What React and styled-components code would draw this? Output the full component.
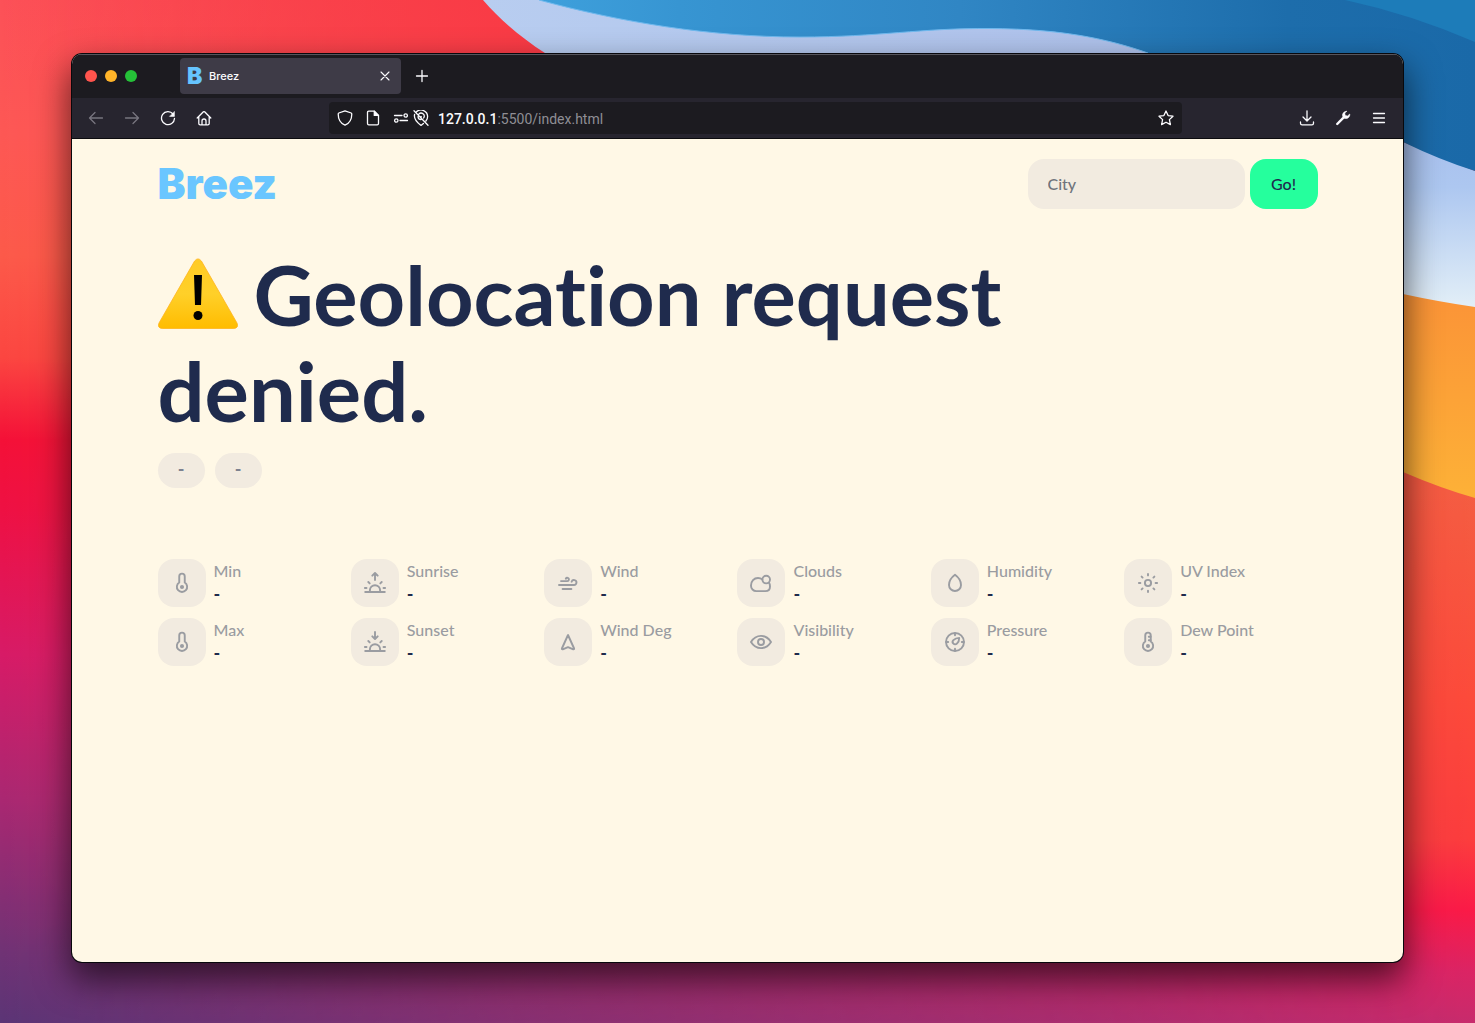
import React from "react";
import styled, { createGlobalStyle } from "styled-components";

const GlobalStyle = createGlobalStyle`
  * { box-sizing: border-box; }
  body { margin: 0; font-family: Lato, "Open Sans", sans-serif; font-variant-ligatures: none; }
  button, input { font-family: inherit; margin: 0; }
`;

const ink = "#1f2b4d";
const muted = "#9a9ca1";
const chip = "#f2ebe0";

const Desktop = styled.div`
  position: relative;
  display: flex;
  min-height: 100vh;
  padding: 54px 72px 61px;
  overflow: hidden;
`;

const WallpaperArt = styled.svg`
  position: absolute;
  inset: 0;
  width: 100%;
  height: 100%;
`;

const BrowserWindow = styled.div`
  position: relative;
  flex: 1;
  display: flex;
  flex-direction: column;
  min-width: 0;
  border-radius: 10px;
  background: #fff8e6;
  box-shadow: 0 0 0 1px #08080c, 0 16px 34px 2px rgba(0, 0, 0, 0.62);
  overflow: hidden;
`;

const TabStrip = styled.div`
  display: flex;
  align-items: center;
  height: 44px;
  padding: 0 13px;
  background: #1c1b20;
  box-shadow: inset 0 1px #56555c;
  font-family: Inter, sans-serif;
`;

const Lights = styled.div`
  display: flex;
  gap: 8px;
  margin-right: 43px;
`;

const Light = styled.span`
  width: 12px;
  height: 12px;
  border-radius: 50%;
  background: ${(p) => p.$color};
`;

const Tab = styled.div`
  display: flex;
  align-items: center;
  gap: 5px;
  width: 221px;
  height: 36px;
  padding: 0 7px;
  border-radius: 4px;
  background: #3e3b47;
  color: #fbfbfe;
  font-size: 11px;
  font-weight: 500;
`;

const Favicon = styled.span`
  width: 17px;
  color: #66c4ff;
  font-size: 23px;
  line-height: 22px;
  font-weight: 900;
`;

const TabTitle = styled.span`
  flex: 1;
`;

const IconButton = styled.button`
  display: flex;
  align-items: center;
  justify-content: center;
  flex: none;
  width: ${(p) => p.$size || 36}px;
  height: ${(p) => p.$size || 36}px;
  padding: 0;
  border: 0;
  background: none;
  color: ${(p) => (p.$dim ? "#77757f" : "#fbfbfe")};

  svg {
    flex: none;
  }
`;

const Toolbar = styled.div`
  display: flex;
  align-items: center;
  height: 41px;
  padding: 0 6px;
  background: #27252f;
  border-bottom: 1px solid #0c0c0f;
`;

const ToolbarSpacer = styled.div`
  flex: 1;
`;

const AddressBar = styled.div`
  display: flex;
  align-items: center;
  flex: 0 1 853px;
  height: 32px;
  padding: 0 2px;
  border-radius: 4px;
  background: #1c1b20;
  color: #fbfbfe;
`;

const Address = styled.div`
  flex: 1;
  padding: 1px 0 0 11px;
  color: #8f8e95;
  font-family: Roboto, sans-serif;
  font-size: 14px;

  strong {
    color: #fbfbfe;
    font-weight: 500;
  }
`;

const Page = styled.main`
  width: 100%;
  max-width: 1160px;
  margin: 0 auto;
  padding: 20px 0;
`;

const Header = styled.header`
  display: flex;
  align-items: center;
  justify-content: space-between;
`;

const Logo = styled.a`
  color: #6ac6ff;
  font-family: Inter, sans-serif;
  font-size: 42px;
  line-height: 50px;
  font-weight: 900;
  text-decoration: none;
`;

const Search = styled.form`
  display: flex;
  gap: 5px;
`;

const CityInput = styled.input`
  width: 217px;
  height: 50px;
  padding: 0 20px 2px;
  border: 0;
  border-radius: 16px;
  background: ${chip};
  color: ${ink};
  font-size: 16px;
  font-weight: 500;

  &::placeholder {
    color: #6f747c;
    opacity: 1;
  }
`;

const GoButton = styled.button`
  width: 68px;
  height: 50px;
  padding: 0 0 2px;
  border: 0;
  border-radius: 16px;
  background: #25ff9d;
  color: ${ink};
  font-size: 16px;
  font-weight: 500;
`;

const Headline = styled.h1`
  max-width: 928px;
  margin: 37px 0 15px;
  color: ${ink};
  font-size: 83px;
  line-height: 96px;
  font-weight: 700;
`;

const WarningArt = styled.svg`
  width: 80px;
  height: 72px;
  margin-right: 16px;
  vertical-align: -4px;
`;

const Pills = styled.div`
  display: flex;
  gap: 10px;
`;

const Pill = styled.span`
  width: 47px;
  height: 35px;
  border-radius: 18px;
  background: ${chip};
  color: #7d8290;
  font-size: 18px;
  line-height: 33px;
  font-weight: 700;
  text-align: center;
`;

const Stats = styled.dl`
  display: grid;
  grid-template-columns: repeat(6, 1fr);
  row-gap: 11px;
  margin: 71px 0 0;
`;

const Stat = styled.div`
  display: grid;
  grid-template-columns: 48px 1fr;
  grid-template-rows: 24px 24px;
  column-gap: 8px;
`;

const StatIcon = styled.span`
  display: flex;
  align-items: center;
  justify-content: center;
  grid-row: span 2;
  width: 48px;
  height: 48px;
  border-radius: 16px;
  background: ${chip};
  color: ${muted};
`;

const StatLabel = styled.dt`
  color: ${muted};
  font-size: 16px;
  line-height: 24px;
  font-weight: 500;
`;

const StatValue = styled.dd`
  margin: 0;
  color: ${ink};
  font-size: 18px;
  line-height: 22px;
  font-weight: 700;
`;

const Line = ({ children, size = 24, width = 1.9, view = 24 }) => (
  <svg width={size} height={size} viewBox={`0 0 ${view} ${view}`} fill="none" stroke="currentColor"
    strokeWidth={width} strokeLinecap="round" strokeLinejoin="round" aria-hidden="true">
    {children}
  </svg>
);

const Chrome = ({ children }) => <Line size={16} view={16} width={1.3}>{children}</Line>;

const thermometer = (
  <>
    <path d="M9.25 5.4a2.75 2.75 0 0 1 5.5 0v6.1a5.15 5.15 0 1 1-5.5 0z" />
    <circle cx="12" cy="16" r="1.1" fill="currentColor" />
  </>
);

const halfSun = (
  <path d="M2.2 21h19.6M6.9 20.8v-1.5a5.1 5.1 0 0 1 10.2 0v1.5M1.9 17h1.6M20.5 17h1.6M5.3 11l1.4 1.4M18.7 11l-1.4 1.4" />
);

const icons = {
  thermometer,
  sunrise: <>{halfSun}<path d="M12 9V2.200M9.300 4.700 12 2l2.700 2.700" /></>,
  sunset: <>{halfSun}<path d="M12 2v6.800M9.300 6.300 12 9l2.700-2.700" /></>,
  wind: <path d="M3 14h15a2.500 2.500 0 1 0-2.400-3.300M5 10.100h6.300a1.650 1.650 0 1 0-1.500-2.400M6.600 18h8.800" />,
  clouds: (
    <>
      <circle cx="17.2" cy="8.600" r="3.800" />
      <path d="M20.200 12c.6 1 .8 2 .8 3.400 0 3-2 4.700-4.600 4.700H7.400a5.300 5.300 0 0 1-5.400-5.500C2 10.200 5 7 9 7c1.600 0 3.200.5 4.300 1.400" />
    </>
  ),
  heading: <path d="M12 5 5.900 18.500c-.2.6.2 1 .8.8l5.300-2.200 5.300 2.200c.6.2 1-.2.8-.8z" />,
  eye: (
    <>
      <path d="M2 12C4.500 7.900 7.900 5.900 12 5.900S19.500 7.900 22 12c-2.500 4.100-5.900 6.100-10 6.100S4.500 16.100 2 12z" />
      <circle cx="12" cy="12" r="3" />
    </>
  ),
  drop: <path d="M12 3.800c3 2.200 6 6.300 6 10.200a6 6 0 0 1-12 0c0-3.900 3-8 6-10.200z" />,
  sun: (
    <>
      <circle cx="12" cy="12" r="3.100" />
      <path d="M12 2.900v1.500M12 19.600v1.500M2.900 12h1.500M19.600 12h1.500M5.600 5.600l1 1M17.400 17.400l1 1M5.600 18.400l1-1M17.400 6.600l1-1" />
    </>
  ),
  gauge: (
    <>
      <circle cx="12" cy="12" r="9" />
      <path d="M12 3.200v2M12 18.800v2M3.200 12h2M18.800 12h2" />
      <path d="M16.200 7.900c0 2-.9 4.400-2.300 5.800a2.400 2.400 0 0 1-3.500-3.500c1.400-1.400 3.800-2.300 5.800-2.300z" />
    </>
  ),
  dew: <>{thermometer}<path d="M12.800 6.800h1.800M12.800 10.300h1.800" /></>,
};

const stats = [
  ["Min", "thermometer"], ["Sunrise", "sunrise"], ["Wind", "wind"],
  ["Clouds", "clouds"], ["Humidity", "drop"], ["UV Index", "sun"],
  ["Max", "thermometer"], ["Sunset", "sunset"], ["Wind Deg", "heading"],
  ["Visibility", "eye"], ["Pressure", "gauge"], ["Dew Point", "dew"],
];

function Wallpaper() {
  return (
    <WallpaperArt viewBox="0 0 1475 1023" preserveAspectRatio="none" aria-hidden="true">
      <defs>
        <linearGradient id="left" x2="0" y2="1">
          <stop offset="0" stopColor="#fc5158" />
          <stop offset=".13" stopColor="#fd5855" />
          <stop offset=".25" stopColor="#fc5a4a" />
          <stop offset=".35" stopColor="#fb4641" />
          <stop offset=".43" stopColor="#f41138" />
          <stop offset=".5" stopColor="#ee1144" />
          <stop offset=".64" stopColor="#d71b67" />
          <stop offset=".78" stopColor="#aa2872" />
          <stop offset=".93" stopColor="#703375" />
          <stop offset="1" stopColor="#5b3576" />
        </linearGradient>
        <linearGradient id="right" x2="0" y2="1">
          <stop offset="0" stopColor="#f43843" />
          <stop offset=".48" stopColor="#f45d42" />
          <stop offset=".68" stopColor="#fc4b3a" />
          <stop offset=".82" stopColor="#fc3d3d" />
          <stop offset=".89" stopColor="#fb1a47" />
          <stop offset=".95" stopColor="#dc2464" />
          <stop offset="1" stopColor="#c82b6c" />
        </linearGradient>
        <linearGradient id="fade">
          <stop offset="0" stopColor="#000" />
          <stop offset=".35" stopColor="#666" />
          <stop offset=".75" stopColor="#bbb" />
          <stop offset="1" stopColor="#fff" />
        </linearGradient>
        <linearGradient id="redTop">
          <stop offset="0" stopColor="#f93a45" stopOpacity="0" />
          <stop offset="1" stopColor="#f93a45" />
        </linearGradient>
        <linearGradient id="blue">
          <stop offset="0" stopColor="#3ea0dc" />
          <stop offset=".15" stopColor="#3795d2" />
          <stop offset=".45" stopColor="#3086c4" />
          <stop offset=".8" stopColor="#1d6dab" />
          <stop offset="1" stopColor="#1a69a8" />
        </linearGradient>
        <linearGradient id="lilac">
          <stop offset="0" stopColor="#b8cdf0" />
          <stop offset="1" stopColor="#a9bbe8" />
        </linearGradient>
        <linearGradient id="mist" x2="0" y2="1">
          <stop offset="0" stopColor="#a7bfee" />
          <stop offset=".3" stopColor="#adc7f0" />
          <stop offset="1" stopColor="#e8f3f8" />
        </linearGradient>
        <linearGradient id="orange" x2="0" y2="1">
          <stop offset="0" stopColor="#fb9337" />
          <stop offset="1" stopColor="#fdb137" />
        </linearGradient>
        <mask id="blend"><rect width="1475" height="1023" fill="url(#fade)" /></mask>
      </defs>
      <rect width="1475" height="1023" fill="url(#left)" />
      <rect width="1475" height="1023" fill="url(#right)" mask="url(#blend)" />
      <rect width="545" height="80" fill="url(#redTop)" />
      <path d="M483 0C500 20 522 38 545 53L600 90H1475V0z" fill="url(#lilac)" />
      <path d="M1380 130 1403 142 1475 171V320H1380z" fill="url(#mist)" />
      <path d="M539 0C620 22 710 37 800 37C880 37 920 28 990 28.500C1060 29 1105 38 1148 53L1403 142Q1440 160 1475 171V0z" fill="url(#blue)" />
      <path d="M539 0C620 22 710 37 800 37C880 37 920 28 990 28.500C1060 29 1105 38 1148 53" fill="none" stroke="#6fb9ee" />
      <path d="M1345 0Q1410 14 1475 42V0z" fill="#1d7cb9" />
      <path d="M1380 290 1403 294Q1440 302 1475 307V498Q1440 488 1403 472L1380 462z" fill="url(#orange)" />
    </WallpaperArt>
  );
}

function BrowserChrome() {
  return (
    <>
      <TabStrip>
        <Lights>
          <Light $color="#ff544d" />
          <Light $color="#ffb429" />
          <Light $color="#25c138" />
        </Lights>
        <Tab>
          <Favicon aria-hidden="true">B</Favicon>
          <TabTitle>Breez</TabTitle>
          <IconButton $size={18} aria-label="Close tab">
            <Line size={18} view={18} width={1.1}><path d="m5 5 8 8M13 5l-8 8" /></Line>
          </IconButton>
        </Tab>
        <IconButton $size={42} aria-label="New tab">
          <Chrome><path d="M8 2.500v11M2.500 8h11" /></Chrome>
        </IconButton>
      </TabStrip>
      <Toolbar>
        <IconButton $dim aria-label="Back"><Chrome><path d="M14.500 8H1.500M7 2.500 1.500 8 7 13.500" /></Chrome></IconButton>
        <IconButton $dim aria-label="Forward"><Chrome><path d="M1.500 8h13M9 2.500 14.500 8 9 13.500" /></Chrome></IconButton>
        <IconButton aria-label="Reload">
          <Chrome>
            <path d="M13 4a6.500 6.500 0 1 0 1.500 4.500" />
            <path d="M14.400 1.800v4.600H9.800z" fill="currentColor" strokeWidth=".6" />
          </Chrome>
        </IconButton>
        <IconButton aria-label="Home">
          <Chrome><path d="m1.200 8 6.200-6.200q.6-.5 1.200 0L14.800 8M2.800 6.800v6.600q0 1.400 1.400 1.400h7.600q1.400 0 1.400-1.400V6.800M6 14.600V11a2 2 0 0 1 4 0v3.600" /></Chrome>
        </IconButton>
        <ToolbarSpacer />
        <AddressBar>
          <IconButton $size={28} aria-label="Tracking protection">
            <Chrome><path d="M8 .8 14.200 3q.6.300.6 1C14.800 9 12 13.500 8 15.200 4 13.500 1.200 9 1.200 4q0-.7.600-1z" /></Chrome>
          </IconButton>
          <IconButton $size={28} aria-label="Site information">
            <Chrome>
              <path d="M9.300 1.200H3.800q-1.300 0-1.300 1.300v11q0 1.300 1.300 1.300h8.400q1.300 0 1.300-1.300V5.400z" />
              <path d="M9.300 1.200v4.200h4.200z" fill="currentColor" />
            </Chrome>
          </IconButton>
          <IconButton $size={28} aria-label="Permissions">
            <Chrome><path d="M1.500 5.500H9M7 10.500h7.500" /><circle cx="12.700" cy="5.500" r="1.700" /><circle cx="3.300" cy="10.500" r="1.700" /></Chrome>
          </IconButton>
          <IconButton $size={12} aria-label="Location blocked">
            <Chrome>
              <path d="M3.500 1.800A6.600 6.600 0 0 1 14.600 6.700c0 1.700-.7 3-1.700 4.300M1.600 4.500C.5 9 4 12.500 8 15.400l2.400-2M5.800 4.100A3.100 3.100 0 0 1 10.600 8M5 6.600a3 3 0 0 0 3 3M8 6.500l.4.400M1 .8l14 14.400" />
            </Chrome>
          </IconButton>
          <Address role="textbox" aria-label="Address" tabIndex={0}><strong>127.0.0.1</strong>:5500/index.html</Address>
          <IconButton $size={28} aria-label="Bookmark">
            <Chrome><path d="m8 1 2.100 4.600 4.900.6-3.600 3.400 1 5L8 12.200l-4.400 2.400 1-5L1 6.200l4.900-.6z" /></Chrome>
          </IconButton>
        </AddressBar>
        <ToolbarSpacer />
        <IconButton aria-label="Downloads">
          <Chrome><path d="M8 .8v10M4 7l4 4 4-4M1.500 12v1.200q0 1.600 1.600 1.600h9.800q1.600 0 1.600-1.600V12" /></Chrome>
        </IconButton>
        <IconButton aria-label="Developer tools">
          <Chrome>
            <path d="M2.200 14 9 7.200" strokeWidth="2.400" />
            <path d="M11.600 1.200a4 4 0 0 0-3.900 5.300L9.500 8.300a4 4 0 0 0 5.300-4.300l-2.300 2-2.300-.5-.4-2.300z" fill="currentColor" strokeWidth=".6" />
          </Chrome>
        </IconButton>
        <IconButton aria-label="Menu"><Chrome><path d="M2.500 3.500h11M2.500 8h11M2.500 12.500h11" /></Chrome></IconButton>
      </Toolbar>
    </>
  );
}

function Warning() {
  return (
    <WarningArt viewBox="0 0 80 72" role="img" aria-label="Warning">
      <defs>
        <linearGradient id="warning" x2="0" y2="1">
          <stop offset="0" stopColor="#ffcb25" />
          <stop offset=".5" stopColor="#ffd029" />
          <stop offset="1" stopColor="#ffbc00" />
        </linearGradient>
      </defs>
      <path d="M36.600 3Q40-1.200 43.400 3L79 65q2 5-3.200 5.500H4.200Q-1 70 1 65z" fill="url(#warning)" stroke="#ffb41c" strokeWidth=".8" />
      <path d="M36 17h8l-1 30h-6z" />
      <circle cx="40" cy="57.500" r="4.500" />
    </WarningArt>
  );
}

export default function App() {
  return (
    <>
      <GlobalStyle />
      <Desktop>
        <Wallpaper />
        <BrowserWindow>
          <BrowserChrome />
          <Page>
            <Header>
              <Logo href="#">Breez</Logo>
              <Search onSubmit={(e) => e.preventDefault()}>
                <CityInput type="text" placeholder="City" aria-label="City" />
                <GoButton type="submit">Go!</GoButton>
              </Search>
            </Header>
            <Headline><Warning />Geolocation request denied.</Headline>
            <Pills>
              <Pill>-</Pill>
              <Pill>-</Pill>
            </Pills>
            <Stats>
              {stats.map(([label, icon]) => (
                <Stat key={label}>
                  <StatIcon><Line>{icons[icon]}</Line></StatIcon>
                  <StatLabel>{label}</StatLabel>
                  <StatValue>-</StatValue>
                </Stat>
              ))}
            </Stats>
          </Page>
        </BrowserWindow>
      </Desktop>
    </>
  );
}
